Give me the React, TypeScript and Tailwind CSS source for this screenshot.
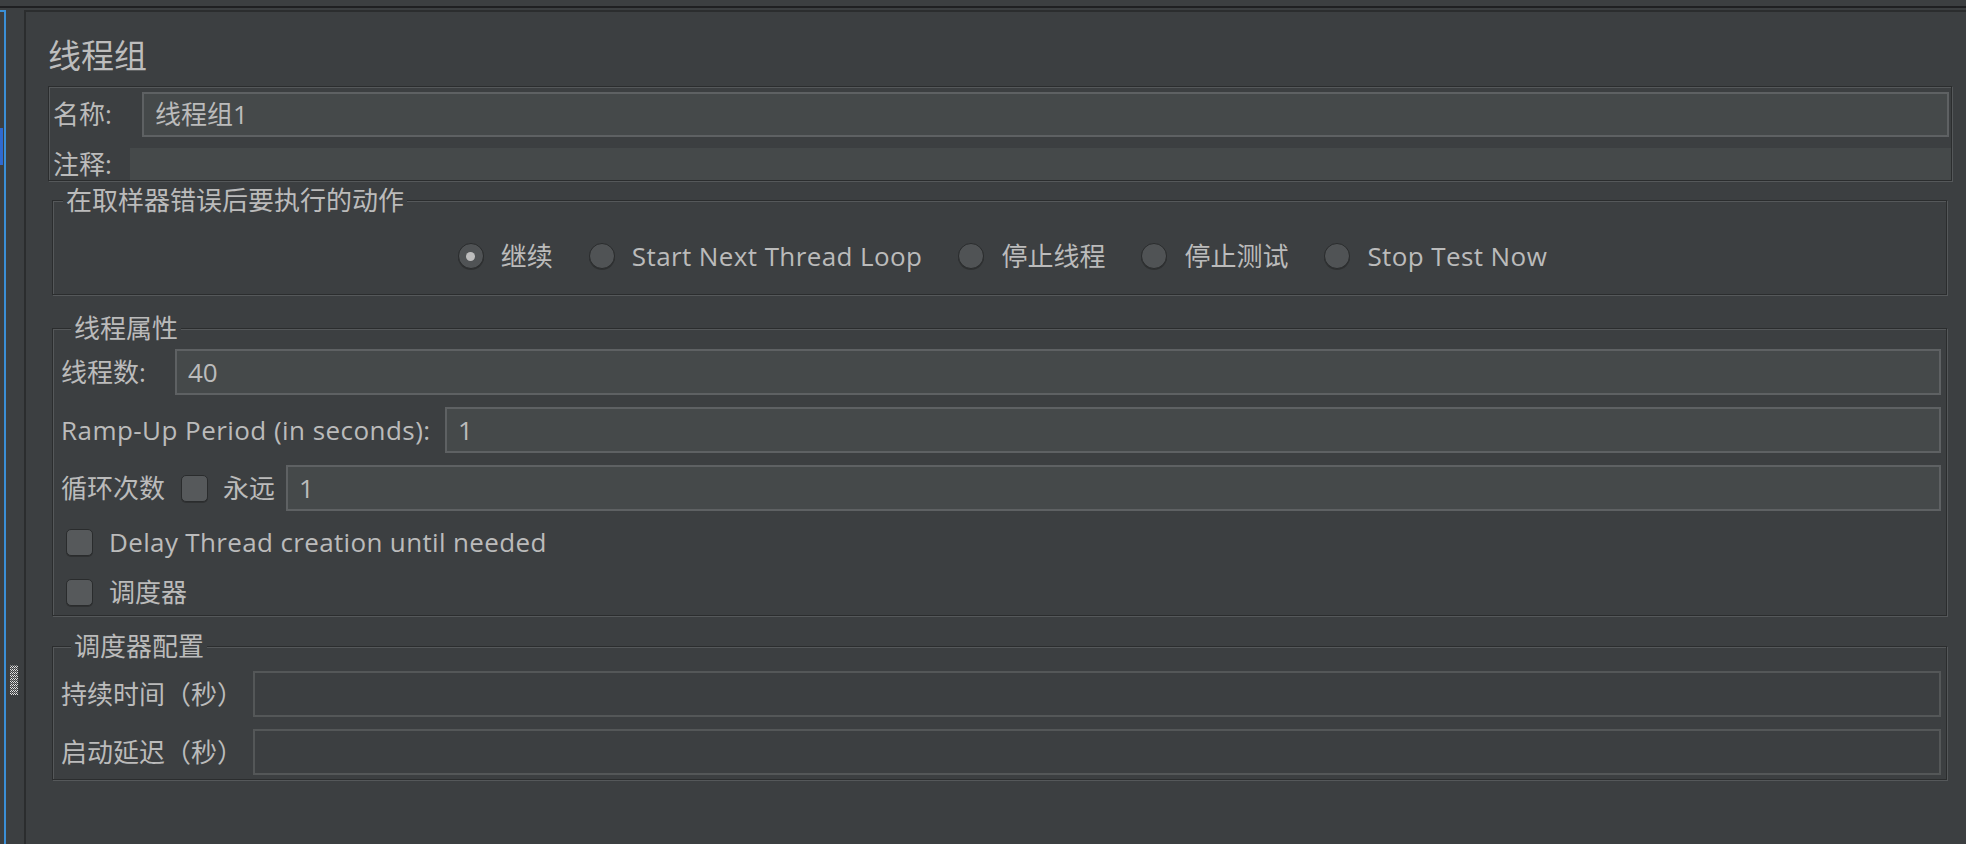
import type { ReactNode } from "react";

const font = "font-['Open_Sans','Noto_Sans_CJK_SC',sans-serif]";

// etched border like a Swing titled border
function Group({ title, className, children }: { title: string; className: string; children: ReactNode }) {
  return (
    <fieldset
      className={
        "border border-[#2b2d2e] shadow-[inset_1px_1px_0_#55585a,1px_1px_0_#55585a] " + className
      }
    >
      <legend className="ml-[10px] px-[3px] bg-[#3c3f41] text-[26px] leading-[30px]">{title}</legend>
      {children}
    </fieldset>
  );
}

function Field({ value, disabled }: { value?: string; disabled?: boolean }) {
  return (
    <div
      className={
        "flex-1 h-[46px] border-2 flex items-center px-[11px] text-[26px] " +
        (disabled ? "bg-[#3c3f41] border-[#545758]" : "bg-[#45494a] border-[#5e6163]")
      }
    >
      {value}
    </div>
  );
}

function Radio({ label, checked, latin }: { label: string; checked?: boolean; latin?: boolean }) {
  return (
    <div className="flex items-center gap-[17px]">
      <div className="w-[26px] h-[26px] rounded-full border border-[#2a2c2d] bg-[#505355] shadow-[0_1px_0_#2f3132] flex items-center justify-center">
        {checked && <div className="w-[9px] h-[9px] rounded-full bg-[#bdbdbd]" />}
      </div>
      <span className={latin ? "tracking-[0.4px]" : ""}>{label}</span>
    </div>
  );
}

function Check() {
  return (
    <div className="w-[27px] h-[27px] shrink-0 rounded-[5px] border border-[#2a2c2d] bg-[#56595b] shadow-[0_1px_0_#2f3132]" />
  );
}

function Grip() {
  const cells = [];
  for (let y = 0; y < 30; y++) {
    for (let x = 0; x < 8; x++) {
      if ((x + y) % 2 === 0) cells.push(<rect key={y * 8 + x} x={x} y={y} width="1" height="1" fill={y % 3 === 0 ? "#8a8a8a" : "#e0e0e0"} />);
    }
  }
  return (
    <svg width="8" height="30" viewBox="0 0 8 30">
      {cells}
    </svg>
  );
}

export default function App() {
  return (
    <div className={"w-[1966px] h-[844px] bg-[#3c3f41] text-[#bbbbbb] flex flex-col overflow-hidden " + font}>
      <div className="h-[8px] border-b-2 border-[#1f2022] shrink-0" />
      <div className="flex flex-1 min-h-0">
        {/* left splitter strip */}
        <div className="w-[24px] shrink-0 flex">
          <div className="w-[6px] mt-[2px] border-t-2 border-r-2 border-[#3b8fd6] flex flex-col">
            <div className="mt-[116px] w-[3px] h-[37px] bg-[#2f6ad0]" />
          </div>
          <div className="ml-[4px] mt-[657px]">
            <Grip />
          </div>
        </div>

        {/* main panel */}
        <div className="flex-1 mt-[2px] border-t-2 border-l-2 border-[#2b2d2e] flex flex-col">
          <div className="mt-[24px] ml-[22px] text-[33px] leading-[40px] text-[#bdbdbd]">线程组</div>

          <div className="mt-[10px] ml-[22px] mr-[14px] border border-[#2b2d2e] shadow-[inset_1px_1px_0_#55585a,1px_1px_0_#55585a] pt-[5px] text-[26px] flex flex-col gap-[11px]">
            <div className="flex items-center pl-[4px] pr-[2px]">
              <span className="w-[89px] shrink-0 whitespace-nowrap">名称:</span>
              <div className="flex-1 h-[45px] border-2 border-[#5e6163] bg-[#45494a] flex items-center px-[11px]">
                线程组1
              </div>
            </div>
            <div className="flex items-center pl-[4px] h-[32px]">
              <span className="w-[77px] shrink-0 whitespace-nowrap">注释:</span>
              <div className="flex-1 h-full bg-[#45494a]" />
            </div>
          </div>

          <Group title="在取样器错误后要执行的动作" className="mt-[4px] ml-[26px] mr-[19px] pb-[23px]">
            <div className="mt-[26px] h-[30px] pl-[6px] flex items-center justify-center gap-[36px] text-[26px]">
              <Radio label="继续" checked />
              <Radio label="Start Next Thread Loop" latin />
              <Radio label="停止线程" />
              <Radio label="停止测试" />
              <Radio label="Stop Test Now" latin />
            </div>
          </Group>

          <Group title="线程属性" className="mt-[18px] ml-[26px] mr-[19px] pl-[8px] pr-[5px] text-[26px]">
            <div className="mt-[6px] flex items-center">
              <span className="w-[114px] shrink-0 whitespace-nowrap">线程数:</span>
              <Field value="40" />
            </div>
            <div className="mt-[12px] flex items-center">
              <span className="w-[384px] shrink-0 whitespace-nowrap tracking-[0.45px]">Ramp-Up Period (in seconds):</span>
              <Field value="1" />
            </div>
            <div className="mt-[12px] flex items-center">
              <span className="w-[120px] shrink-0 whitespace-nowrap">循环次数</span>
              <Check />
              <span className="ml-[15px] w-[63px] shrink-0">永远</span>
              <Field value="1" />
            </div>
            <div className="mt-[8px] h-[46px] flex items-center pl-[5px] gap-[16px]">
              <Check />
              <span className="tracking-[0.35px]">Delay Thread creation until needed</span>
            </div>
            <div className="mt-[4px] h-[46px] flex items-center pl-[5px] gap-[16px]">
              <Check />
              <span>调度器</span>
            </div>
          </Group>

          <Group title="调度器配置" className="mt-[15px] ml-[26px] mr-[19px] pl-[8px] pr-[5px] pb-[4px] text-[26px]">
            <div className="mt-[10px] flex items-center">
              <span className="w-[192px] shrink-0 whitespace-nowrap">持续时间（秒）</span>
              <Field disabled />
            </div>
            <div className="mt-[12px] flex items-center">
              <span className="w-[192px] shrink-0 whitespace-nowrap">启动延迟（秒）</span>
              <Field disabled />
            </div>
          </Group>
        </div>
      </div>
    </div>
  );
}
